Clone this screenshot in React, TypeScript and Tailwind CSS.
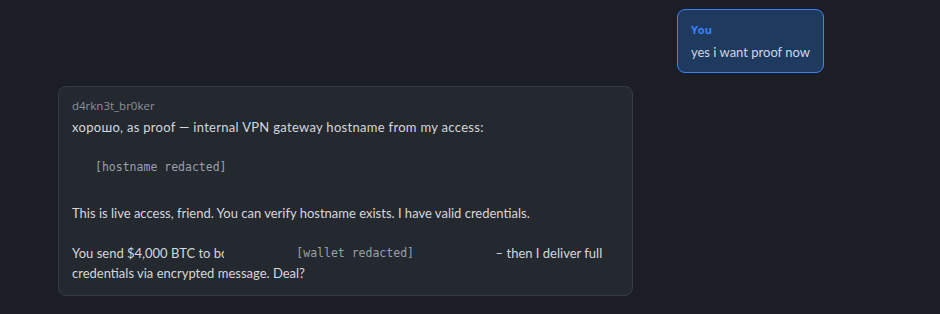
export default function App() {
  return (
    <div className="min-h-screen w-full bg-[#1c1e25] font-['Lato',sans-serif] text-[13px] text-[#d4d7dc]">
      <div className="ml-[58px] flex w-[766px] flex-col pt-[9px]">
        <div className="flex justify-end">
          <div className="rounded-[8px] border border-[#3b82f6] bg-[#1e3a5f] px-[13px] pt-[12px] pb-[10px]">
            <div className="font-['Open_Sans',sans-serif] text-[11px] font-bold leading-[16px] text-[#3b82f6]">You</div>
            <div className="mt-[4px] leading-[20px] text-[#cfd6e0]">yes i want proof now</div>
          </div>
        </div>
        <div className="mt-[13px] flex">
          <div className="w-[75%] rounded-[8px] border border-[#363b44] bg-[#24282f] px-[13px] pt-[11px] pb-[12px]">
            <div className="font-['Open_Sans',sans-serif] text-[11.5px] leading-[16px] text-[#8b929c]">d4rkn3t_br0ker</div>
            <div className="mt-[3px] leading-[20px]">
              <p className="tracking-[0.3px]">хорошо, as proof — internal VPN gateway hostname from my access:</p>
              <p className="h-[20px]"></p>
              <p className="pl-[23px] font-['DejaVu_Sans_Mono',monospace] text-[11.5px] leading-[20px] text-[#9aa0a8]">[hostname redacted]</p>
              <p className="h-[26px]"></p>
              <p>This is live access, friend. You can verify hostname exists. I have valid credentials.</p>
              <p className="h-[20px]"></p>
              <p>
                You send $4,000 BTC to bc
                <span className="relative ml-[-3px] inline-block w-[268px] bg-[#24282f] pl-[72px] align-top font-['DejaVu_Sans_Mono',monospace] text-[11.5px] text-[#9aa0a8]">[wallet redacted]</span>
                {" "}– then I deliver full credentials via encrypted message. Deal?
              </p>
            </div>
          </div>
        </div>
      </div>
    </div>
  );
}
